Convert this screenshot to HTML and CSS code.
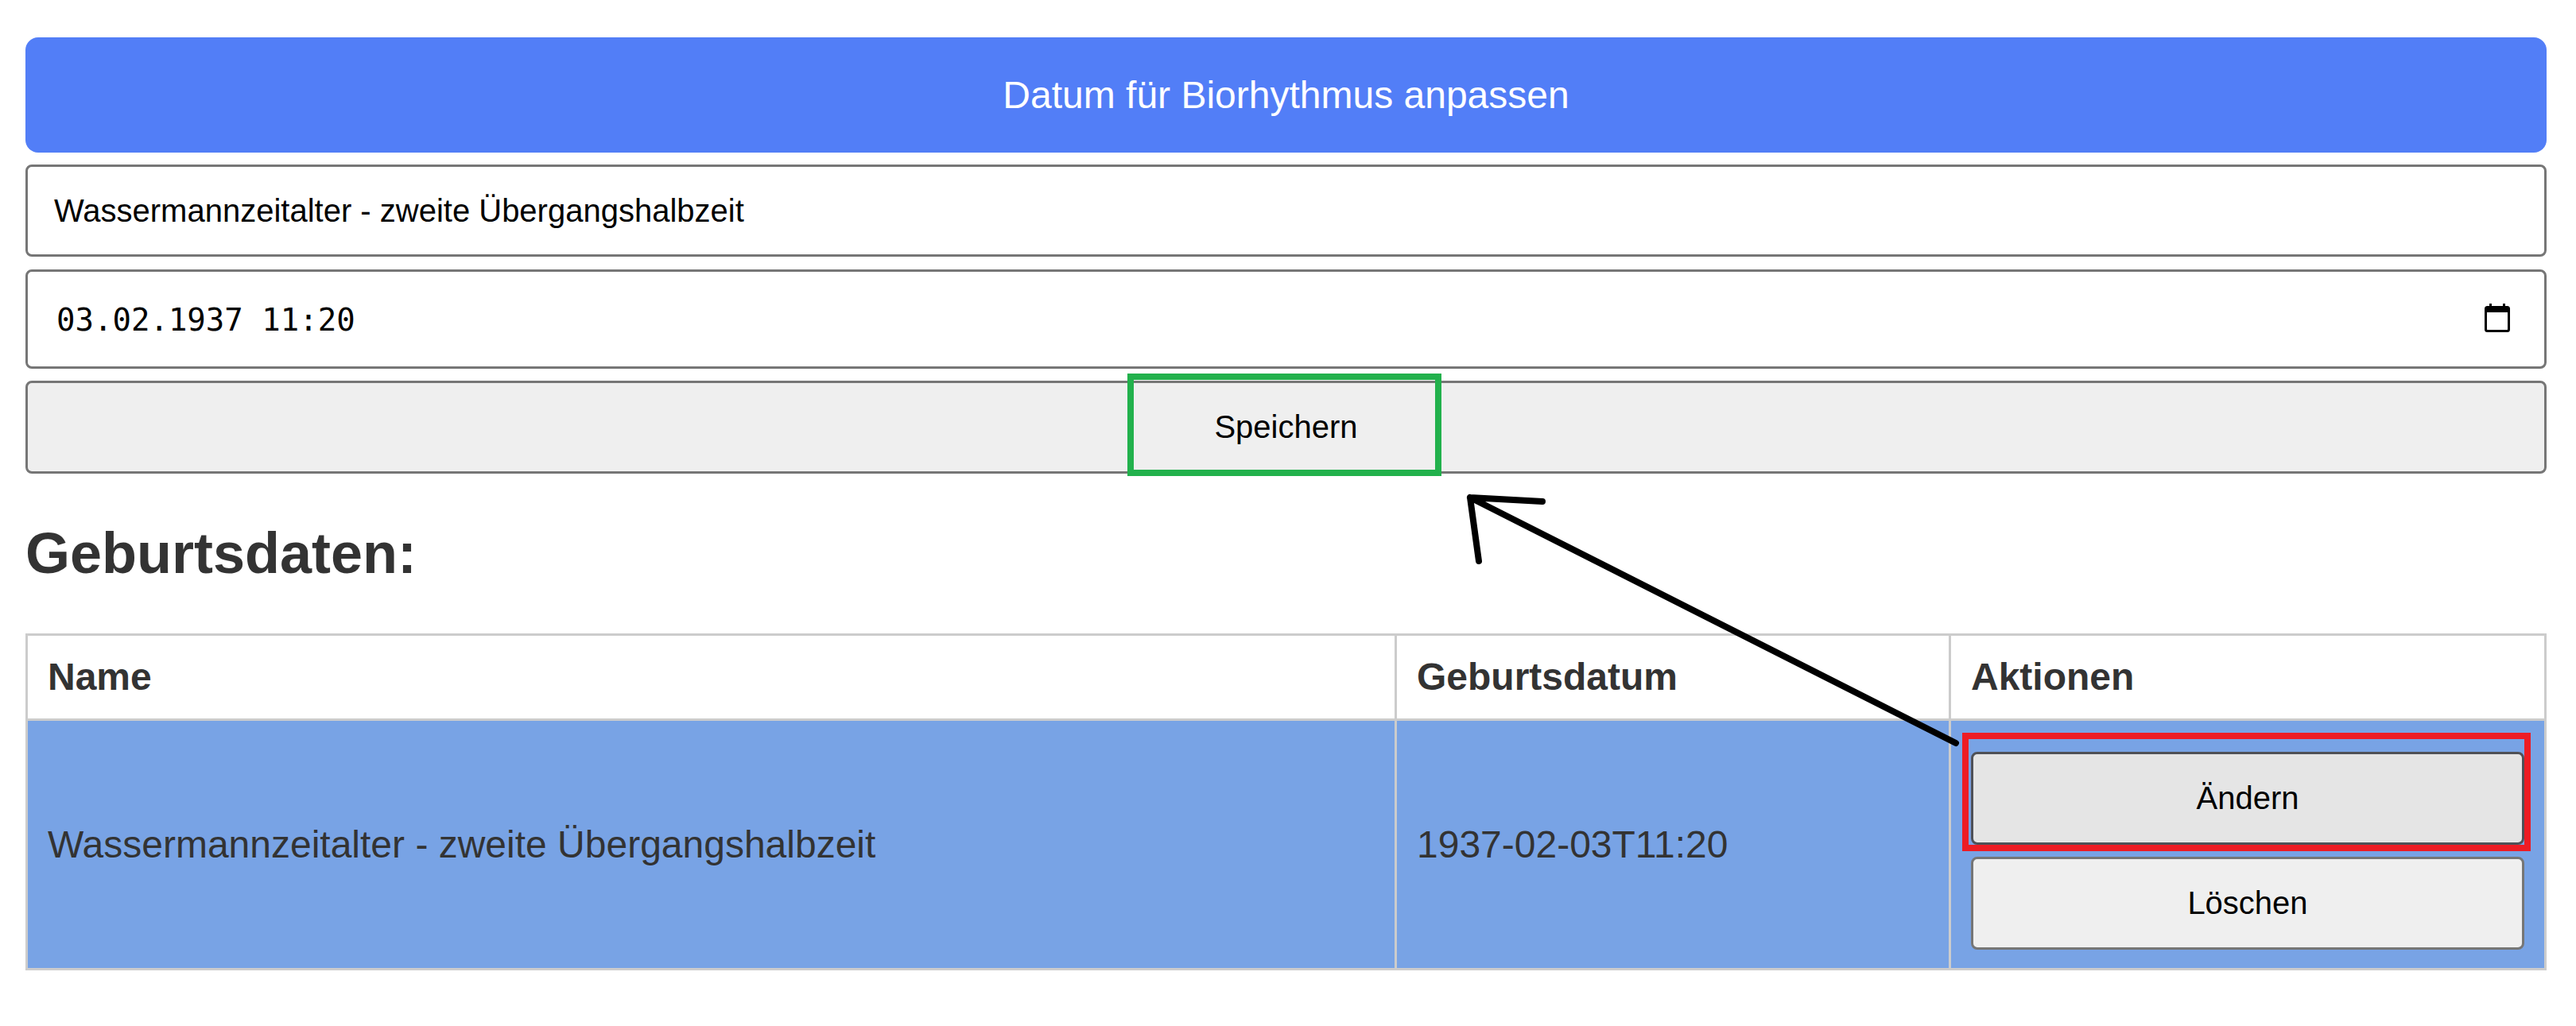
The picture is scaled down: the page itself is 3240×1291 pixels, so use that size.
FILE: index.html
```html
<!DOCTYPE html>
<html lang="de">
<head>
<meta charset="utf-8">
<title>Biorhythmus</title>
<link rel="stylesheet" href="styles.css">
</head>
<body>
<main class="page">
  <form class="form">
    <button type="button" class="title">Datum für Biorhythmus anpassen</button>
    <div class="field field-text">Wassermannzeitalter - zweite Übergangshalbzeit</div>
    <div class="field field-date">
      <span class="date-value">03.02.1937 11:20</span>
      <svg class="cal" viewBox="0 0 32 36" aria-hidden="true">
        <path d="M6 0h3v3h14V0h3v3h2.500A3.500 3.500 0 0 1 32 6.500v26a3.500 3.500 0 0 1-3.500 3.500h-25A3.500 3.500 0 0 1 0 32.500v-26A3.500 3.500 0 0 1 3.500 3H6zM3 11v21.500c0 .3.200.5.500.5h25c.3 0 .5-.2.500-.5V11z" fill="#000" fill-rule="evenodd"/>
      </svg>
    </div>
    <button type="button" class="btn btn-save">Speichern</button>
  </form>
  <h2 class="heading">Geburtsdaten:</h2>
  <table class="table">
    <colgroup><col class="col-name"><col class="col-date"><col></colgroup>
    <thead>
      <tr><th>Name</th><th>Geburtsdatum</th><th>Aktionen</th></tr>
    </thead>
    <tbody>
      <tr class="row-active">
        <td>Wassermannzeitalter - zweite Übergangshalbzeit</td>
        <td>1937-02-03T11:20</td>
        <td class="actions">
          <button type="button" class="btn btn-pressed">Ändern</button>
          <button type="button" class="btn">Löschen</button>
        </td>
      </tr>
    </tbody>
  </table>
</main>
<svg class="annotations" width="3240" height="1291" viewBox="0 0 3240 1291" aria-hidden="true">
  <rect x="1422" y="474" width="387" height="121" fill="none" stroke="#22b14c" stroke-width="8"/>
  <rect x="2472" y="926" width="707" height="141" fill="none" stroke="#ed1c24" stroke-width="8"/>
  <path d="M2460 935L1849 626M1849 626L1940 631M1849 626L1860 706" fill="none" stroke="#000" stroke-width="8" stroke-linecap="round" stroke-linejoin="round"/>
</svg>
</body>
</html>
```
FILE: styles.css
```css
html, body { margin: 0; padding: 0; background: #fff; }
body { font-family: "Liberation Sans", Arial, sans-serif; color: #333; height: 1291px; overflow: hidden; position: relative; }
.page { width: 3171px; margin-left: 32px; padding-top: 47px; }
.form { display: flex; flex-direction: column; gap: 15px; }
.title { height: 145px; border: 0; border-radius: 16px; background: #527ef7; color: #fff; font: 48px "Liberation Sans", Arial, sans-serif; padding: 0; }
.field { box-sizing: border-box; display: flex; align-items: center; border: 3px solid #767676; border-radius: 8px; background: #fff; color: #000; padding: 0 33px; }
.field-text { height: 116px; font-size: 40px; }
.field-date { height: 125px; justify-content: space-between; margin-top: 1px; padding-right: 43px; }
.date-value { font-family: "DejaVu Sans Mono", monospace; font-size: 39px; margin: 2px 0 0 3px; }
.cal { width: 32px; height: 36px; margin-top: -3px; }
.btn { box-sizing: border-box; display: block; width: 100%; height: 117px; border: 3px solid #767676; border-radius: 8px; background: #efefef; color: #000; font: 40px "Liberation Sans", Arial, sans-serif; padding: 0; }
.btn-pressed { background: #e5e5e5; border-color: #4f5157; }
.heading { margin: 59px 0 0; font-size: 72px; line-height: 82px; font-weight: 700; color: #333; }
.table { width: 100%; margin-top: 60px; border-collapse: collapse; table-layout: fixed; border: 3px solid #ccc; font-size: 48px; color: #333; }
.table th, .table td { border: 3px solid #ccc; padding: 0 25px; text-align: left; }
.table th { height: 102px; padding-bottom: 2px; font-size: 48px; font-weight: 700; background: #fff; }
.col-name { width: 1722px; }
.col-date { width: 697px; }
.row-active { background: #78a3e5; }
.row-active td { height: 311px; }
.table .actions { padding: 15px 25px 0; height: 296px; }
.actions .btn + .btn { margin-top: 15px; }
.annotations { position: absolute; left: 0; top: 0; pointer-events: none; }
```
